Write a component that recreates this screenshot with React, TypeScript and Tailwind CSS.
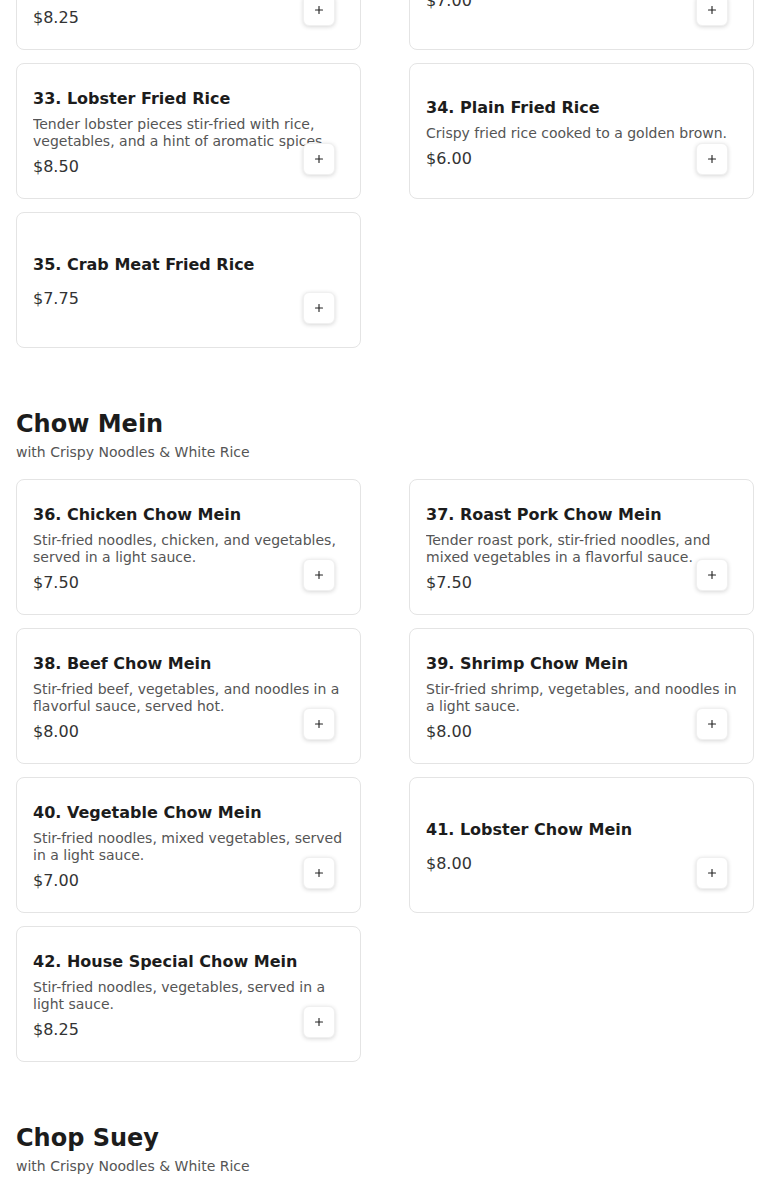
import { Plus } from "lucide-react";

interface MenuItem {
    num: number;
    name: string;
    desc?: string;
    price: string;
}

interface MenuSection {
    title: string;
    subtitle?: string;
    items: MenuItem[];
}

const sections: MenuSection[] = [
    {
        title: "Fried Rice",
        items: [
            { num: 31, name: "House Special Fried Rice", desc: "Shrimp, chicken and roast pork stir-fried with rice, egg and vegetables.", price: "$8.25" },
            { num: 32, name: "Vegetable Fried Rice", price: "$7.00" },
            { num: 33, name: "Lobster Fried Rice", desc: "Tender lobster pieces stir-fried with rice, vegetables, and a hint of aromatic spices.", price: "$8.50" },
            { num: 34, name: "Plain Fried Rice", desc: "Crispy fried rice cooked to a golden brown.", price: "$6.00" },
            { num: 35, name: "Crab Meat Fried Rice", price: "$7.75" },
        ],
    },
    {
        title: "Chow Mein",
        subtitle: "with Crispy Noodles & White Rice",
        items: [
            { num: 36, name: "Chicken Chow Mein", desc: "Stir-fried noodles, chicken, and vegetables, served in a light sauce.", price: "$7.50" },
            { num: 37, name: "Roast Pork Chow Mein", desc: "Tender roast pork, stir-fried noodles, and mixed vegetables in a flavorful sauce.", price: "$7.50" },
            { num: 38, name: "Beef Chow Mein", desc: "Stir-fried beef, vegetables, and noodles in a flavorful sauce, served hot.", price: "$8.00" },
            { num: 39, name: "Shrimp Chow Mein", desc: "Stir-fried shrimp, vegetables, and noodles in a light sauce.", price: "$8.00" },
            { num: 40, name: "Vegetable Chow Mein", desc: "Stir-fried noodles, mixed vegetables, served in a light sauce.", price: "$7.00" },
            { num: 41, name: "Lobster Chow Mein", price: "$8.00" },
            { num: 42, name: "House Special Chow Mein", desc: "Stir-fried noodles, vegetables, served in a light sauce.", price: "$8.25" },
        ],
    },
    {
        title: "Chop Suey",
        subtitle: "with Crispy Noodles & White Rice",
        items: [
            { num: 43, name: "Chicken Chop Suey", desc: "Chicken with bean sprouts, celery and onions in a brown sauce.", price: "$7.50" },
            { num: 44, name: "Roast Pork Chop Suey", desc: "Roast pork with bean sprouts, celery and onions.", price: "$7.50" },
        ],
    },
];

const ItemCard = ({ item }: { item: MenuItem }) => (
    <div className="relative h-[136px] rounded-lg border border-[#e4e4e4] bg-white px-4 pt-1 flex flex-col justify-center">
        <h3 className="text-base leading-6 font-bold text-[#1c1c1c]">
            {item.num}. {item.name}
        </h3>
        {item.desc && (
            <p className="mt-[5px] text-sm leading-[17px] text-[#555] line-clamp-2">{item.desc}</p>
        )}
        <div className={`${item.desc ? "mt-[5px]" : "mt-2.5"} text-base leading-6 text-[#333]`}>{item.price}</div>
        <button className="absolute right-[25px] bottom-[23px] w-8 h-8 rounded-md bg-white flex items-center justify-center shadow-[0_1px_4px_rgba(0,0,0,0.16)] border border-[#f0f0f0]">
            <Plus className="w-3 h-3 text-[#222]" strokeWidth={2.25} />
        </button>
    </div>
);

export default function App() {
    return (
        <div className="min-h-screen overflow-hidden bg-white font-['DejaVu_Sans',sans-serif]">
            <div className="px-4 -mt-[86px]">
                {sections.map((section, i) => (
                    <section key={section.title} className={i === 0 ? "" : "mt-[60px]"}>
                        {i > 0 && (
                            <div>
                                <h2 className="text-2xl leading-8 font-bold text-[#1c1c1c]">{section.title}</h2>
                                {section.subtitle && (
                                    <p className="mt-[2px] text-sm leading-5 text-[#555]">{section.subtitle}</p>
                                )}
                            </div>
                        )}
                        <div className={`grid grid-cols-2 gap-x-12 gap-y-[13px] ${i > 0 ? "mt-[17px]" : ""}`}>
                            {section.items.map((item) => (
                                <ItemCard key={item.num} item={item} />
                            ))}
                        </div>
                    </section>
                ))}
            </div>
        </div>
    );
}
